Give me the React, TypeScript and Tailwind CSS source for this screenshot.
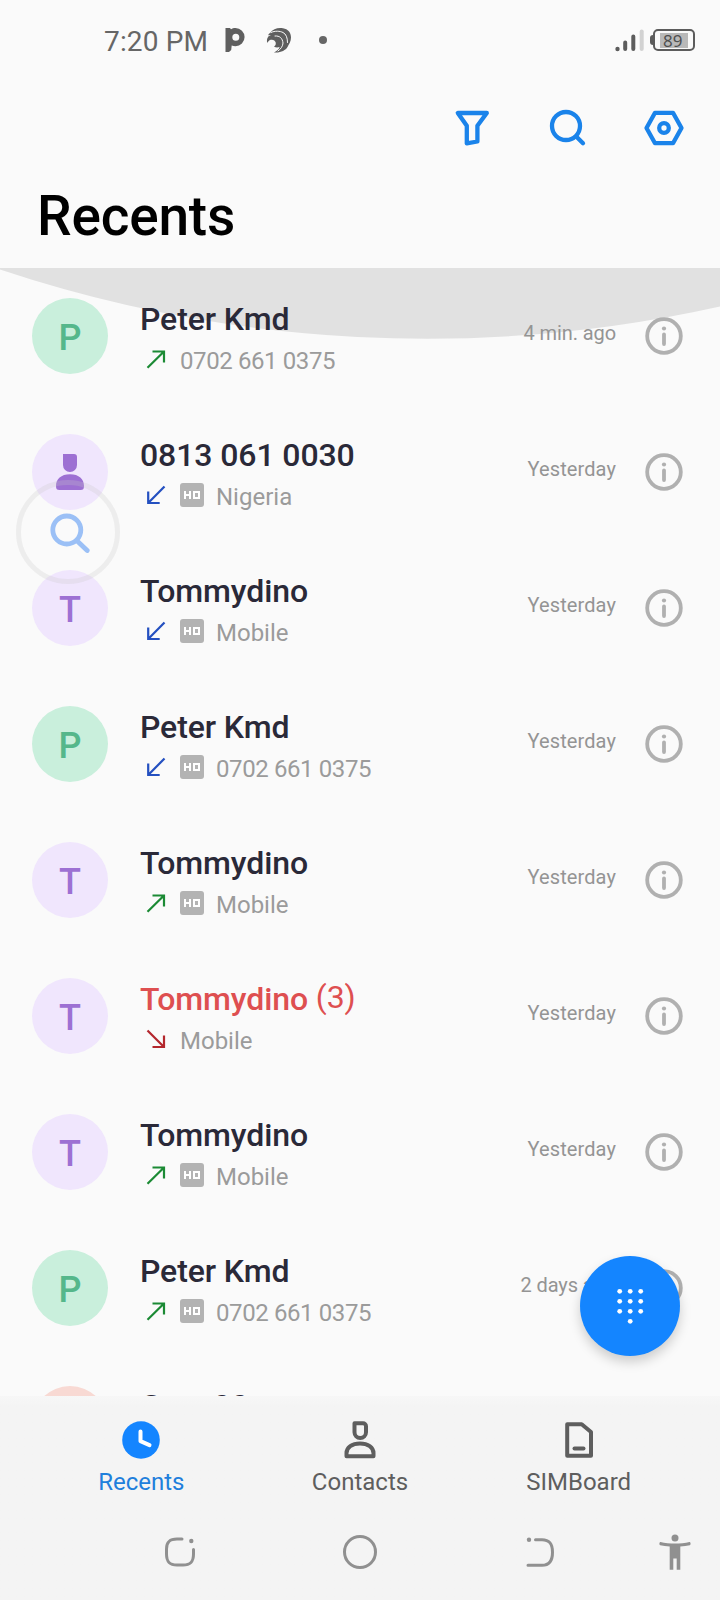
import type { ReactNode } from "react"

type Direction = "out" | "in" | "missed"

interface Call {
  name: string
  count?: number
  detail: string
  direction: Direction
  hd?: boolean
  time: string
  avatar: "green" | "purple" | "red"
  letter?: string
}

const calls: Call[] = [
  { name: "Peter Kmd", detail: "0702 661 0375", direction: "out", time: "4 min. ago", avatar: "green", letter: "P" },
  { name: "0813 061 0030", detail: "Nigeria", direction: "in", hd: true, time: "Yesterday", avatar: "purple" },
  { name: "Tommydino", detail: "Mobile", direction: "in", hd: true, time: "Yesterday", avatar: "purple", letter: "T" },
  { name: "Peter Kmd", detail: "0702 661 0375", direction: "in", hd: true, time: "Yesterday", avatar: "green", letter: "P" },
  { name: "Tommydino", detail: "Mobile", direction: "out", hd: true, time: "Yesterday", avatar: "purple", letter: "T" },
  { name: "Tommydino", count: 3, detail: "Mobile", direction: "missed", time: "Yesterday", avatar: "purple", letter: "T" },
  { name: "Tommydino", detail: "Mobile", direction: "out", hd: true, time: "Yesterday", avatar: "purple", letter: "T" },
  { name: "Peter Kmd", detail: "0702 661 0375", direction: "out", hd: true, time: "2 days ago", avatar: "green", letter: "P" },
]

const avatarColors = {
  green: "bg-[#c9efdc] text-[#55b78b]",
  purple: "bg-[#f0e6fd] text-[#9d70d3]",
  red: "bg-[#f8d9d3] text-[#e0705c]",
}

function StatusBar() {
  return (
    <div className="flex h-20 items-center pl-[104px] pr-[25px] text-[#666]">
      <span className="mt-[3px] text-[28px] leading-none tracking-[0.15px]">7:20 PM</span>
      <svg className="ml-[17px]" width="20" height="26" viewBox="0 0 20 26">
        <path
          fill="#5f5f5f"
          fillRule="evenodd"
          d="M.5 1h4.500l1 1.200C7.300 1.400 8.500 1 10.500 1a9 9 0 0 1 0 18.200c-1.400 0-2.600-.2-3.800-.7L6.200 23 4 25H.5zM10.800 6.700a3.500 3.500 0 1 0 0 7 3.500 3.500 0 0 0 0-7z"
        />
      </svg>
      <svg className="ml-[21px]" width="26" height="26" viewBox="0 0 26 26">
        <path
          fill="#5f5f5f"
          d="M4 6C7 1.500 12 .5 17 1.200c5 .8 8 4.300 8 9.300 0 4-2 6.500-3.500 9.500-2 3.500-7 6-13.500 5.400 3-1.400 5-3 5.600-5.400-2 .8-4 .6-5.600-.4 1.500-.7 2-2 1.700-4-.6-2.300-3-3.600-5.700-2.600C3 13.500 2 14.500 1.200 16 .5 12 1.500 9 5 8c-1-.2-2-.1-3 .4.5-1 1-1.700 2-2.400z"
        />
        <g fill="none" stroke="#fafafa" strokeWidth="1" strokeLinecap="round">
          <path d="M5 5.500c4-2 9-1.500 12 0 3 1.500 4.500 5 4.500 10" />
          <path d="M9 9c5-.5 7.500 2.500 8 7-.2 3-2 6-5 8" />
        </g>
      </svg>
      <span className="ml-[27px] h-2 w-2 rounded-full bg-[#666]" />
      <svg className="ml-auto" width="30" height="24" viewBox="0 0 30 24">
        <circle cx="3.500" cy="21" r="2.200" fill="#5c5c5c" />
        <g strokeWidth="4" strokeLinecap="round">
          <path stroke="#5c5c5c" d="M11.200 14.500v6.500M19.300 8.500V21" />
          <path stroke="#d2d2d2" d="M27.700 3.500V21" />
        </g>
      </svg>
      <div className="ml-[6px] flex items-center">
        <span className="h-[10px] w-[3px] rounded-l-sm bg-[#5c5c5c]" />
        <span className="flex h-[22px] w-[42px] items-center rounded-[5px] border-2 border-[#5c5c5c] px-[5px]">
          <span className="flex h-[15px] w-[30px] items-center bg-[#b9b9b9] pl-[3px] font-['Noto_Sans'] text-[17px] leading-none text-[#4f4f4f]">
            89
          </span>
        </span>
      </div>
    </div>
  )
}

function Header() {
  return (
    <header className="flex h-[188px] flex-col">
      <div className="flex justify-end gap-14 pr-9 pt-7">
        <svg width="40" height="40" viewBox="0 0 40 40" fill="none" stroke="#1a83ea" strokeWidth="4.300" strokeLinejoin="round">
          <path d="M5.800 5h29L25.400 17.800v15.700l-10.600 1.800V17.800z" />
        </svg>
        <svg width="40" height="40" viewBox="0 0 40 40" fill="none" stroke="#1a83ea" strokeWidth="4.300" strokeLinecap="round">
          <circle cx="18" cy="18" r="14" />
          <path d="m28.500 28.700 6.500 6.600" />
        </svg>
        <svg width="40" height="40" viewBox="0 0 40 40" fill="none" stroke="#1a83ea" strokeWidth="4.300" strokeLinejoin="round">
          <path d="M2.500 20 11 4.800h18L37.500 20 29 35.200H11z" />
          <circle cx="20" cy="20" r="4.800" />
        </svg>
      </div>
      <h1 className="ml-[37px] mt-9 text-[55px] font-medium leading-[64px] tracking-[-0.2px] text-black">Recents</h1>
    </header>
  )
}

function DirectionArrow({ direction }: { direction: Direction }) {
  if (direction === "out") {
    return (
      <svg width="24" height="24" viewBox="0 0 24 24" fill="none" stroke="#1b8a34" strokeWidth="2.200">
        <path d="M3.500 20.800 20 4.500M8.500 4.500H20v11" />
      </svg>
    )
  }
  if (direction === "in") {
    return (
      <svg width="24" height="24" viewBox="0 0 24 24" fill="none" stroke="#2450c0" strokeWidth="2.200">
        <path d="M20.500 3.500 4.200 20M4.200 8.500V20h11.500" />
      </svg>
    )
  }
  return (
    <svg width="24" height="24" viewBox="0 0 24 24" fill="none" stroke="#b3262c" strokeWidth="2.200">
      <path d="m3.500 3.500 16.500 16.500M20 8.500V20H8.500" />
    </svg>
  )
}

function HdBadge() {
  return (
    <svg className="ml-3" width="24" height="24" viewBox="0 0 24 24">
      <rect width="24" height="24" rx="3" fill="#b3b3b3" />
      <path fill="none" stroke="#fff" strokeWidth="2" d="M5 8v8M10 8v8M5 12h5M14 9h5v6h-5z" />
    </svg>
  )
}

function Avatar({ call }: { call: Call }) {
  return (
    <div className={`flex h-[76px] w-[76px] shrink-0 items-center justify-center rounded-full ${avatarColors[call.avatar]}`}>
      {call.letter ? (
        <span className="mt-[3px] text-[36px] font-medium leading-none">{call.letter}</span>
      ) : (
        <svg width="30" height="38" viewBox="0 0 30 38" fill="currentColor">
          <path d="M8 1h11a3 3 0 0 1 3 3v8a7 7 0 0 1-14 0zM1 33c0-7 5-11.800 14-11.800S29 26 29 33c0 3-1 4-3.500 4h-21C2 37 1 36 1 33z" />
        </svg>
      )}
    </div>
  )
}

function CallRow({ call }: { call: Call }) {
  const missed = call.direction === "missed"
  const numeric = /^\d/.test(call.detail)
  return (
    <li className="flex h-[136px] shrink-0 items-center pl-8 pr-[37px]">
      <Avatar call={call} />
      <div className="ml-8 mt-[2px] flex-1">
        <div
          className={`flex h-[38px] whitespace-pre text-[32px] leading-10 tracking-[-0.1px] ${missed ? "text-[#de4f50]" : "text-[#2a2938]"}`}
        >
          <span className="font-medium">{call.name}</span>
          {call.count && <span className="-mt-[2px]"> ({call.count})</span>}
        </div>
        <div className="mt-[6px] flex h-8 items-center pl-1">
          <DirectionArrow direction={call.direction} />
          {call.hd && <HdBadge />}
          <span className={`ml-3 mt-1 text-[24px] leading-8 text-[#9b9b9b] ${numeric ? "tracking-[-0.4px]" : ""}`}>
            {call.detail}
          </span>
        </div>
      </div>
      <span
        className={`-mt-[6px] text-[20px] leading-6 text-[#949494] ${call.time === "Yesterday" ? "tracking-[0.1px]" : "tracking-[-0.1px]"}`}
      >
        {call.time}
      </span>
      <svg className="ml-[29px]" width="38" height="38" viewBox="0 0 38 38" fill="none" stroke="#b0b0b0" strokeWidth="3.800">
        <circle cx="19" cy="19" r="16.800" />
        <path d="M19 17.500v9.500" strokeLinecap="round" />
        <circle cx="19" cy="11.500" r="2.100" fill="#b0b0b0" stroke="none" />
      </svg>
    </li>
  )
}

function Tab({ label, active, children }: { label: string; active?: boolean; children: ReactNode }) {
  return (
    <button className={`flex flex-1 flex-col items-center ${active ? "text-[#1f7fdc]" : "text-[#5e5e5e]"}`}>
      {children}
      <span className="mt-[6px] text-[24px] leading-8">{label}</span>
    </button>
  )
}

function TabBar() {
  return (
    <nav className="flex h-[116px] px-8 pt-6">
      <Tab label="Recents" active>
        <svg width="40" height="40" viewBox="0 0 40 40">
          <circle cx="20" cy="20" r="18.800" fill="#1485ff" />
          <path d="M19.500 11.500v9.700l9 4" fill="none" stroke="#fff" strokeWidth="4" strokeLinecap="round" strokeLinejoin="round" />
        </svg>
      </Tab>
      <Tab label="Contacts">
        <svg width="40" height="40" viewBox="0 0 40 40" fill="none" stroke="currentColor" strokeWidth="4" strokeLinejoin="round">
          <path d="M14.500 3.200h8.500a3 3 0 0 1 3 3v6a5.750 5.750 0 0 1-11.500 0zM6.500 36.300v-3.100c0-5.700 5.500-9.700 13.500-9.700s13.500 4 13.500 9.700v3.100z" />
        </svg>
      </Tab>
      <Tab label="SIMBoard">
        <svg width="40" height="40" viewBox="0 0 40 40" fill="none" stroke="currentColor" strokeWidth="4" strokeLinejoin="round">
          <path d="M8.200 4.200h14.500L32 12v23.800H8.200z" />
          <path d="M15.500 28.500h9" strokeLinecap="round" />
        </svg>
      </Tab>
    </nav>
  )
}

function SystemNav() {
  return (
    <div className="flex h-[88px] pl-[90px] pt-5 text-[#909090]">
      <div className="flex w-[180px] justify-center">
        <svg width="40" height="40" viewBox="0 0 40 40" fill="none" stroke="currentColor" strokeWidth="3" strokeLinecap="round">
          <path d="M22 7h-5C9.500 7 6.500 10 6.500 17v5c0 8 3 11 10.500 11h6c7.500 0 10.500-3 10.500-11v-4.500" />
          <circle cx="31.300" cy="9" r="2.200" fill="currentColor" stroke="none" />
        </svg>
      </div>
      <div className="flex w-[180px] justify-center">
        <svg width="40" height="40" viewBox="0 0 40 40" fill="none" stroke="currentColor" strokeWidth="3">
          <circle cx="20" cy="20" r="15.500" />
        </svg>
      </div>
      <div className="flex w-[180px] justify-center">
        <svg width="40" height="40" viewBox="0 0 40 40" fill="none" stroke="currentColor" strokeWidth="3" strokeLinecap="round">
          <path d="M15.500 7.700h6.500c7.500 0 10.500 4 10.500 12.500S29.500 33.300 22 33.300H8" />
          <circle cx="9" cy="7.800" r="2.200" fill="currentColor" stroke="none" />
        </svg>
      </div>
      <div className="flex flex-1 justify-center">
        <svg width="40" height="40" viewBox="0 0 40 40" fill="currentColor">
          <circle cx="20" cy="6" r="3.500" />
          <path d="M5.500 9.900c9 2 20 2 29 0 1.300 0 1.500 2.800.3 3.300-3 .5-6 1-9.500 1.300v23.300h-3.600V26.500h-3.400v11.300h-3.600V14.500c-3.500-.3-6.500-.8-9.500-1.300-1.200-.5-1-3.300.3-3.300z" />
        </svg>
      </div>
    </div>
  )
}

export default function App() {
  return (
    <div className="relative flex h-[1600px] w-[720px] flex-col overflow-hidden bg-[#fafafa] font-[Roboto,sans-serif]">
      <StatusBar />
      <Header />

      <main className="relative h-[1128px] overflow-hidden">
        {/* overscroll glow */}
        <svg className="absolute left-0 top-0" width="720" height="72" viewBox="0 0 720 72">
          <path d="M0 0v1.500A1350 1350 0 0 0 720 38.500V0z" fill="#e1e1e1" />
        </svg>
        <ul className="relative flex flex-col">
          {calls.map((call, i) => (
            <CallRow key={i} call={call} />
          ))}
          {/* next entry, mostly under the tab bar */}
          <li className="flex h-[136px] shrink-0 items-center pl-8">
            <div className={`h-[76px] w-[76px] rounded-full ${avatarColors.red}`} />
            <span className="-mt-9 ml-8 text-[32px] font-medium leading-10 tracking-[-0.3px] text-[#2a2938]">Gary 00</span>
          </li>
        </ul>
      </main>

      <footer className="bg-linear-to-b from-[#f7f7f7] to-[#f4f4f4] to-5%">
        <TabBar />
        <SystemNav />
      </footer>

      {/* floating search bubble */}
      <div className="absolute left-4 top-[480px] flex h-[104px] w-[104px] items-center justify-center rounded-full border-[5px] border-[#c8c8c8]/25">
        <svg width="44" height="44" viewBox="0 0 44 44" fill="none" stroke="#9bc0f6" strokeWidth="4.800" strokeLinecap="round">
          <circle cx="20.800" cy="20" r="14" />
          <path d="m31.200 31 10 9.500" />
        </svg>
      </div>

      {/* dial pad button */}
      <button className="absolute left-[580px] top-[1256px] flex h-[100px] w-[100px] items-center justify-center rounded-full bg-[#1485ff] shadow-[0_6px_12px_rgba(0,0,0,0.18)]">
        <svg width="36" height="40" viewBox="0 0 36 40" fill="#fff">
          {[5.300, 15.300, 25.300].map((y) =>
            [7.700, 18.200, 28.700].map((x) => <circle key={`${x}-${y}`} cx={x} cy={y} r="2.400" />)
          )}
          <circle cx="18.200" cy="35.300" r="2.400" />
        </svg>
      </button>
    </div>
  )
}
